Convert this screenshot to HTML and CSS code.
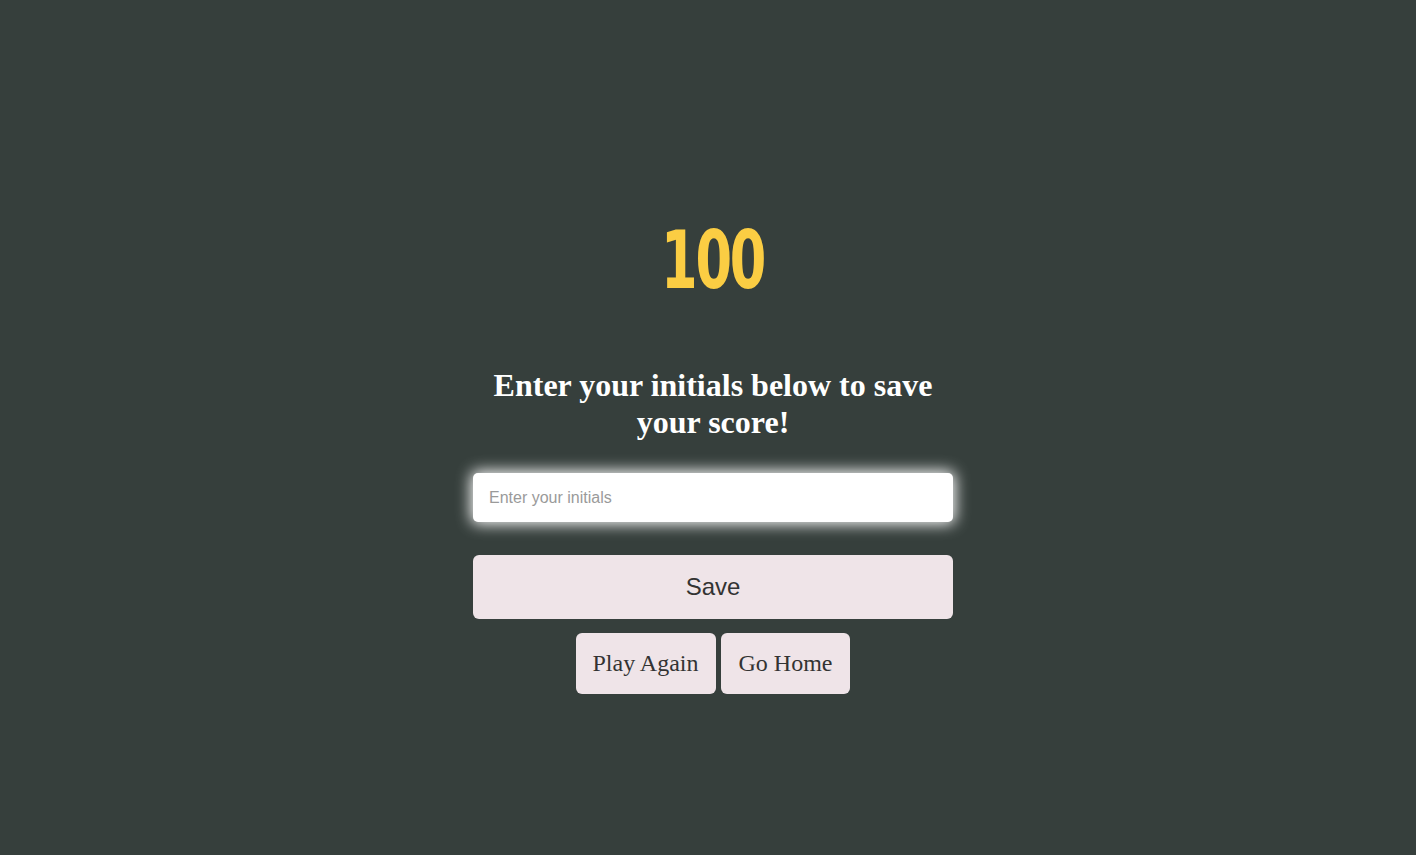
FILE: index.html
```html
<!DOCTYPE html>
<html>
<head>
<meta charset="utf-8">
<link rel="stylesheet" href="styles.css">
</head>
<body>
<main class="end">
  <div class="score">100</div>
  <h2 class="prompt">Enter your initials below to save your score!</h2>
  <form class="save-form">
    <input class="initials" type="text" placeholder="Enter your initials">
    <button class="btn-save" type="button">Save</button>
  </form>
  <div class="actions">
    <button class="btn-nav" type="button">Play Again</button>
    <button class="btn-nav" type="button">Go Home</button>
  </div>
</main>
</body>
</html>
```
FILE: styles.css
```css
html, body {
  margin: 0;
  padding: 0;
  background: #363f3c;
  height: 100%;
}
.end {
  display: flex;
  flex-direction: column;
  align-items: center;
  padding-top: 221px;
  padding-left: 10px;
  box-sizing: border-box;
}
.score {
  font-family: "DejaVu Sans Condensed", "DejaVu Sans", sans-serif;
  font-weight: bold;
  font-size: 80px;
  line-height: 1;
  color: #fbcd43;
  transform: scaleX(0.73);
  letter-spacing: -3px;
}
.prompt {
  font-family: "Liberation Serif", serif;
  font-weight: bold;
  font-size: 32px;
  color: #fff;
  text-align: center;
  width: 480px;
  margin: 66px 0 32px;
  line-height: 37px;
}
.save-form {
  display: flex;
  flex-direction: column;
  width: 480px;
  gap: 33px;
}
.initials {
  height: 49px;
  box-sizing: border-box;
  border: none;
  border-radius: 5px;
  padding: 0 16px;
  font-family: "Liberation Sans", Arial, sans-serif;
  font-size: 16px;
  box-shadow: 0 0 15px 2px #ffffff;
  outline: none;
}
.initials::placeholder {
  color: #9a9a9a;
}
.btn-save {
  height: 64px;
  border: none;
  border-radius: 6px;
  background: #efe4e8;
  color: #333;
  font-family: "Liberation Sans", Arial, sans-serif;
  font-size: 24px;
}
.actions {
  display: flex;
  gap: 5px;
  margin-top: 14px;
}
.btn-nav {
  height: 61px;
  padding: 0 17px;
  border: none;
  border-radius: 6px;
  background: #efe4e8;
  color: #333;
  font-family: "Liberation Serif", serif;
  font-size: 24px;
}
.btn-nav + .btn-nav {
  padding: 0 18px;
}
```
